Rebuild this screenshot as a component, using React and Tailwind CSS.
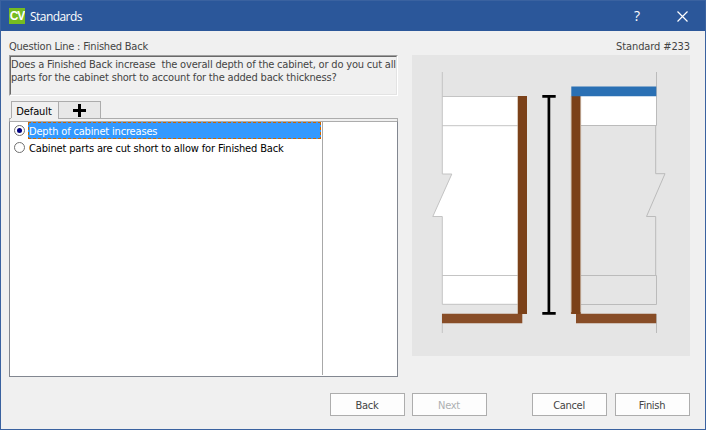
const TAHOMA = "font-['DejaVu_Sans_Condensed','DejaVu_Sans',sans-serif]";

function Header() {
  return (
    <header className="flex h-[30px] shrink-0 items-center bg-[#2b579a] pl-2 text-white">
      <div className="flex h-4 w-4 items-center justify-center overflow-hidden bg-[#76bc21]">
        <span className="font-['Liberation_Sans',sans-serif] text-[12px] leading-none font-bold tracking-[-1px]">CV</span>
      </div>
      <h1 className="ml-[5px] font-['Open_Sans',sans-serif] text-[12px] tracking-[-0.55px]">Standards</h1>
      <button className="ml-auto w-8 font-['Open_Sans',sans-serif] text-[14px] leading-none">?</button>
      <button className="ml-[13px] mr-[7px] flex w-8 justify-center">
        <svg width="11" height="11" viewBox="0 0 11 11" fill="none" stroke="currentColor" strokeWidth="1.2">
          <path d="M0.5 0.5L10.5 10.5M10.5 0.5L0.5 10.5" />
        </svg>
      </button>
    </header>
  );
}

function Option({ label, selected, spacing }) {
  return (
    <label className="flex h-[17px] w-[311px] items-center">
      <span className="ml-[4px] flex h-[11px] w-[11px] shrink-0 items-center justify-center rounded-full border border-[#707070] bg-white">
        {selected && <span className="h-[5px] w-[5px] rounded-full bg-[#000080]" />}
      </span>
      <span className={`relative ml-[3px] flex h-[17px] flex-1 items-center pt-[2px] pl-px whitespace-nowrap ${spacing} ${selected ? "bg-[#3399ff] text-white" : "text-black"}`}>
        {label}
        {selected && (
          <svg className="absolute inset-0 h-full w-full" fill="none">
            <path d="M0 0.5H293M0 16.5H293M0.5 0V17M292.5 0V17" stroke="#cc6600" strokeDasharray="3 2" />
          </svg>
        )}
      </span>
    </label>
  );
}

function Diagram() {
  return (
    <svg className="block" width="278" height="301" viewBox="412 55 278 301" fill="none">
      <path fill="#e5e5e5" d="M412 55h278v301H412z" />
      <path fill="#fff" d="M442 96h76v208h-76v-88h-9l19-42h-10z" />
      <g stroke="#c4c4c4">
        <path d="M442.3 72v102h9.5l-19 42.5h9.5v87.8H518M442 96.5h76M442 125.7h76M442 275.5h76M442.3 314v19" />
      </g>
      <path fill="#fff" d="M581 96h75v29h-75z" />
      <g stroke="#bbb">
        <path d="M656.5 72v53.5H581M655.7 125v48.7h9.3l-18.5 42.8h9.2v59M581 275.5h75.5v29H581M656.5 314v19" />
      </g>
      <path fill="#7b4119" d="M518 96h9v218h-9zM571.3 96h9.2v218h-9.2z" />
      <path stroke="#bfa68f" strokeWidth="0.6" d="M517.5 96v218M571.2 96v218M580.7 96v218" />
      <path fill="#884d27" d="M442 313.7h80.3v9.6H442zM576 313.7h80.2v9.6H576z" />
      <path fill="#7b4119" d="M518 312h9v2h-9zM571.3 312h9.2v2h-9.2z" />
      <path fill="#2a70b4" d="M571.3 86.5h85v9.7h-85z" />
      <path stroke="#000" strokeWidth="2.7" d="M548.9 96v217M542.3 96.3h13.4M542.3 313.3h13.4" />
    </svg>
  );
}

function Button({ children, disabled }) {
  return (
    <button
      disabled={disabled}
      className={`flex h-[23px] w-[75px] items-center justify-center border border-[#adadad] bg-[#fdfdfd] pt-[2px] pr-px text-[11px] tracking-[-0.3px] ${disabled ? "text-[#aeb0b2]" : "text-[#444]"}`}
    >
      {children}
    </button>
  );
}

export default function App() {
  return (
    <div className={`flex h-[430px] w-[706px] flex-col overflow-hidden border border-[#3a62a0] bg-[#f0f0f0] text-[11px] leading-[13px] text-[#444] ${TAHOMA}`}>
      <Header />
      <div className="mt-[9px] flex h-[15px] shrink-0 items-start justify-between pr-[15px] pl-[8px]">
        <span className="tracking-[-0.22px]">Question Line : Finished Back</span>
        <span className="tracking-[-0.11px]">Standard #233</span>
      </div>
      <main className="flex h-[322px] shrink-0 pl-[8px]">
        <div className="w-[389px]">
          <div className="h-[41px] border-t border-r border-b border-l border-t-[#a0a0a0] border-r-white border-b-white border-l-[#a0a0a0]">
            <p className="h-full border border-t-[#696969] border-r-[#e3e3e3] border-b-[#e3e3e3] border-l-[#696969] pt-px tracking-[-0.18px] whitespace-pre">
              {"Does a Finished Back increase  the overall depth of the cabinet, or do you cut all\nparts for the cabinet short to account for the added back thickness?"}
            </p>
          </div>
          <div className="mt-[5px] flex h-[17px] pl-[2px]">
            <div className="flex w-[47px] items-center justify-center border-t border-l border-[#acacac] pt-[3px] pr-[2px] tracking-[-0.1px] text-black">
              Default
            </div>
            <div className="flex w-[43px] items-center justify-center border border-b-0 border-[#acacac] bg-[#e8e8e8] pt-px">
              <svg width="13" height="13" viewBox="0 0 13 13" stroke="#000" strokeWidth="3">
                <path d="M0 6.5h13M6.5 0v13" />
              </svg>
            </div>
          </div>
          <div className="flex">
            <div className="h-px w-[2px] bg-[#acacac]" />
            <div className="h-px w-[47px]" />
            <div className="h-px flex-1 bg-[#acacac]" />
          </div>
          <div className="h-[2px] border-x border-[#acacac]" />
          <div className="flex h-[256px] border border-t-[#acacac] border-r-[#828790] border-b-[#828790] border-l-[#828790] bg-white">
            <div className="w-[312px] shrink-0">
              <Option label="Depth of cabinet increases" spacing="tracking-[-0.17px]" selected />
              <Option label="Cabinet parts are cut short to allow for Finished Back" spacing="tracking-[-0.15px]" />
            </div>
            <div className="h-[253px] border-l border-[#a8a8a8]" />
          </div>
        </div>
        <div className="ml-[14px]">
          <Diagram />
        </div>
      </main>
      <footer className="mt-[16px] flex pl-[329px]">
        <Button>Back</Button>
        <div className="ml-[7px]"><Button disabled>Next</Button></div>
        <div className="ml-[45px]"><Button>Cancel</Button></div>
        <div className="ml-[8px]"><Button>Finish</Button></div>
      </footer>
    </div>
  );
}
